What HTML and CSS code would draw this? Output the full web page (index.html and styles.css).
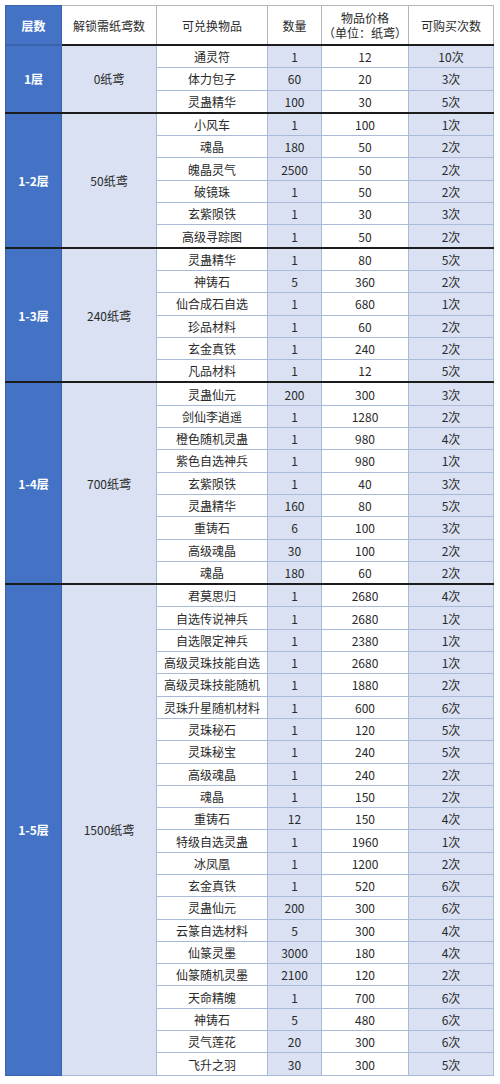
FILE: index.html
```html
<!DOCTYPE html>
<html lang="zh">
<head>
<meta charset="utf-8">
<link rel="stylesheet" href="styles.css">
</head>
<body>
<table class="shop">
  <colgroup>
    <col class="c1"><col class="c2"><col class="c3"><col class="c4"><col class="c5"><col class="c6">
  </colgroup>
  <thead>
    <tr class="head">
      <th class="floor">层数</th>
      <th>解锁需纸鸢数</th>
      <th>可兑换物品</th>
      <th>数量</th>
      <th>物品价格<br>（单位：纸鸢）</th>
      <th>可购买次数</th>
    </tr>
  </thead>
  <tbody class="sec">
    <tr><td class="floor" rowspan="3">1层</td><td class="need" rowspan="3">0纸鸢</td><td>通灵符</td><td class="alt">1</td><td>12</td><td class="alt">10次</td></tr>
    <tr><td>体力包子</td><td class="alt">60</td><td>20</td><td class="alt">3次</td></tr>
    <tr><td>灵蛊精华</td><td class="alt">100</td><td>30</td><td class="alt">5次</td></tr>
  </tbody>
  <tbody class="sec">
    <tr><td class="floor" rowspan="6">1-2层</td><td class="need" rowspan="6">50纸鸢</td><td>小风车</td><td class="alt">1</td><td>100</td><td class="alt">1次</td></tr>
    <tr><td>魂晶</td><td class="alt">180</td><td>50</td><td class="alt">2次</td></tr>
    <tr><td>魄晶灵气</td><td class="alt">2500</td><td>50</td><td class="alt">2次</td></tr>
    <tr><td>破镜珠</td><td class="alt">1</td><td>50</td><td class="alt">2次</td></tr>
    <tr><td>玄紫陨铁</td><td class="alt">1</td><td>30</td><td class="alt">3次</td></tr>
    <tr><td>高级寻踪图</td><td class="alt">1</td><td>50</td><td class="alt">2次</td></tr>
  </tbody>
  <tbody class="sec">
    <tr><td class="floor" rowspan="6">1-3层</td><td class="need" rowspan="6">240纸鸢</td><td>灵蛊精华</td><td class="alt">1</td><td>80</td><td class="alt">5次</td></tr>
    <tr><td>神铸石</td><td class="alt">5</td><td>360</td><td class="alt">2次</td></tr>
    <tr><td>仙合成石自选</td><td class="alt">1</td><td>680</td><td class="alt">1次</td></tr>
    <tr><td>珍品材料</td><td class="alt">1</td><td>60</td><td class="alt">2次</td></tr>
    <tr><td>玄金真铁</td><td class="alt">1</td><td>240</td><td class="alt">2次</td></tr>
    <tr><td>凡品材料</td><td class="alt">1</td><td>12</td><td class="alt">5次</td></tr>
  </tbody>
  <tbody class="sec">
    <tr><td class="floor" rowspan="9">1-4层</td><td class="need" rowspan="9">700纸鸢</td><td>灵蛊仙元</td><td class="alt">200</td><td>300</td><td class="alt">3次</td></tr>
    <tr><td>剑仙李逍遥</td><td class="alt">1</td><td>1280</td><td class="alt">2次</td></tr>
    <tr><td>橙色随机灵蛊</td><td class="alt">1</td><td>980</td><td class="alt">4次</td></tr>
    <tr><td>紫色自选神兵</td><td class="alt">1</td><td>980</td><td class="alt">1次</td></tr>
    <tr><td>玄紫陨铁</td><td class="alt">1</td><td>40</td><td class="alt">3次</td></tr>
    <tr><td>灵蛊精华</td><td class="alt">160</td><td>80</td><td class="alt">5次</td></tr>
    <tr><td>重铸石</td><td class="alt">6</td><td>100</td><td class="alt">3次</td></tr>
    <tr><td>高级魂晶</td><td class="alt">30</td><td>100</td><td class="alt">2次</td></tr>
    <tr><td>魂晶</td><td class="alt">180</td><td>60</td><td class="alt">2次</td></tr>
  </tbody>
  <tbody class="sec">
    <tr><td class="floor" rowspan="22">1-5层</td><td class="need" rowspan="22">1500纸鸢</td><td>君莫思归</td><td class="alt">1</td><td>2680</td><td class="alt">4次</td></tr>
    <tr><td>自选传说神兵</td><td class="alt">1</td><td>2680</td><td class="alt">1次</td></tr>
    <tr><td>自选限定神兵</td><td class="alt">1</td><td>2380</td><td class="alt">1次</td></tr>
    <tr><td>高级灵珠技能自选</td><td class="alt">1</td><td>2680</td><td class="alt">1次</td></tr>
    <tr><td>高级灵珠技能随机</td><td class="alt">1</td><td>1880</td><td class="alt">2次</td></tr>
    <tr><td>灵珠升星随机材料</td><td class="alt">1</td><td>600</td><td class="alt">6次</td></tr>
    <tr><td>灵珠秘石</td><td class="alt">1</td><td>120</td><td class="alt">5次</td></tr>
    <tr><td>灵珠秘宝</td><td class="alt">1</td><td>240</td><td class="alt">5次</td></tr>
    <tr><td>高级魂晶</td><td class="alt">1</td><td>240</td><td class="alt">2次</td></tr>
    <tr><td>魂晶</td><td class="alt">1</td><td>150</td><td class="alt">2次</td></tr>
    <tr><td>重铸石</td><td class="alt">12</td><td>150</td><td class="alt">4次</td></tr>
    <tr><td>特级自选灵蛊</td><td class="alt">1</td><td>1960</td><td class="alt">1次</td></tr>
    <tr><td>冰凤凰</td><td class="alt">1</td><td>1200</td><td class="alt">2次</td></tr>
    <tr><td>玄金真铁</td><td class="alt">1</td><td>520</td><td class="alt">6次</td></tr>
    <tr><td>灵蛊仙元</td><td class="alt">200</td><td>300</td><td class="alt">6次</td></tr>
    <tr><td>云篆自选材料</td><td class="alt">5</td><td>300</td><td class="alt">4次</td></tr>
    <tr><td>仙篆灵墨</td><td class="alt">3000</td><td>180</td><td class="alt">4次</td></tr>
    <tr><td>仙篆随机灵墨</td><td class="alt">2100</td><td>120</td><td class="alt">2次</td></tr>
    <tr><td>天命精魄</td><td class="alt">1</td><td>700</td><td class="alt">6次</td></tr>
    <tr><td>神铸石</td><td class="alt">5</td><td>480</td><td class="alt">6次</td></tr>
    <tr><td>灵气莲花</td><td class="alt">20</td><td>300</td><td class="alt">6次</td></tr>
    <tr><td>飞升之羽</td><td class="alt">30</td><td>300</td><td class="alt">5次</td></tr>
  </tbody>
</table>
</body>
</html>
```

FILE: styles.css
```css
html, body {
  margin: 0;
  padding: 0;
  background: #ffffff;
}

body {
  padding: 5px 0 0 5px;
  font-family: "Noto Sans CJK SC", "Noto Sans", sans-serif;
  font-size: 12px;
  color: #2a2a2a;
}

.shop {
  border-collapse: collapse;
  table-layout: fixed;
  width: 488px;
  border: 1.5px solid #333;
  border-top-color: #8a8a8a;
}

.c1 { width: 56px; }
.c2 { width: 95px; }
.c3 { width: 111px; }
.c4 { width: 54px; }
.c5 { width: 87px; }
.c6 { width: 85px; }

.shop th,
.shop td {
  padding: 0;
  text-align: center;
  vertical-align: middle;
  border: 1px solid #a9b9d8;
  line-height: 15px;
  white-space: nowrap;
  overflow: hidden;
}

.shop th {
  height: 38px;
  font-weight: normal;
  background: #ffffff;
  border-color: #b5b5b5;
  border-bottom: 2px solid #1c1c1c;
}

.shop td {
  height: 21.3px;
}

.shop .floor {
  background: #4472c4;
  color: #ffffff;
  font-weight: bold;
  border-color: #3b63ab;
}

.shop th.floor {
  font-weight: bold;
}

.shop .need {
  background: #d9e1f2;
  border-color: #a9b9d8;
}

.shop .alt {
  background: #d9e1f2;
}

.sec {
  border-top: 2px solid #1c1c1c;
}
```
